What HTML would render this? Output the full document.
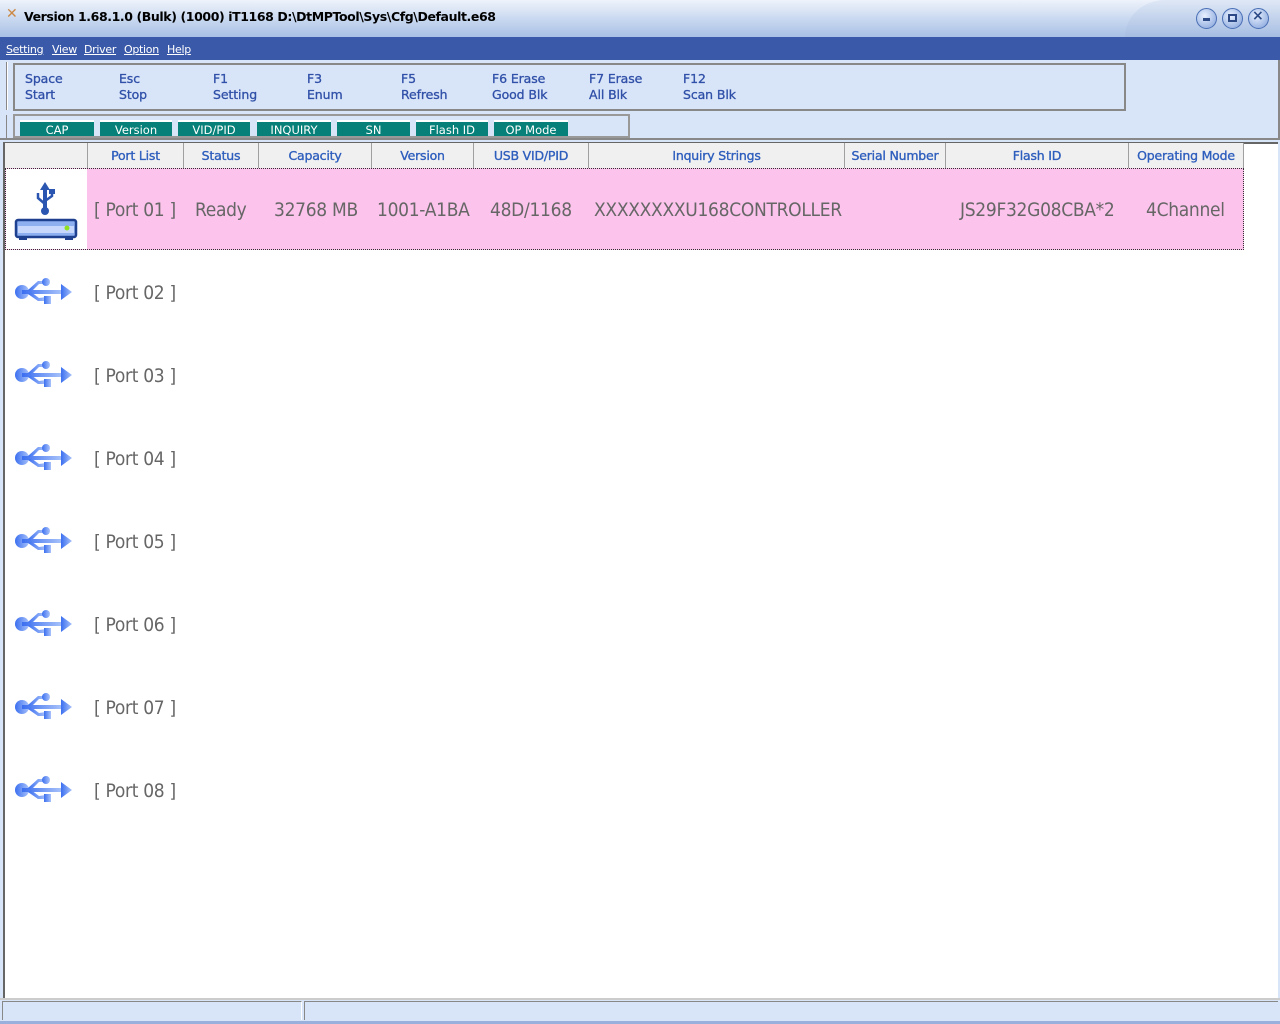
<!DOCTYPE html>
<html><head><style>
*{margin:0;padding:0;box-sizing:border-box}
body{width:1280px;height:1024px;position:relative;background:#d8e4f8;font-family:"DejaVu Sans","Liberation Sans",sans-serif;overflow:hidden}
.a{position:absolute}
#title{left:0;top:0;width:1280px;height:37px;background:linear-gradient(#eef3fb,#c3d4ee 60%,#a9c1e6);}
#title .t{left:24px;top:9px;font-size:12.5px;color:#000;font-family:"DejaVu Sans",sans-serif;font-weight:bold;letter-spacing:-0.4px}
#menu{left:0;top:37px;width:1280px;height:23px;background:#3a59a9;}
#menu span{position:absolute;top:6px;font-size:11px;color:#fff;text-decoration:underline;letter-spacing:-0.3px}
.tb{font-size:12.5px;color:#3050a8;line-height:16px;letter-spacing:-0.1px;-webkit-text-stroke:0.3px #3050a8}
.tab{top:120px;height:16px;background:#068078;color:#fff;font-size:11.5px;text-align:center;line-height:17px;border-top:2px solid #fff}
.hd{top:143px;height:25px;background:#f0f0f0;border-right:1px solid #a0a0a0;color:#2e5ebd;font-size:12.5px;text-align:center;line-height:25px;letter-spacing:-0.2px;-webkit-text-stroke:0.35px #2e5ebd}
.rt{font-size:19px;color:#666;font-family:"DejaVu Sans Condensed","DejaVu Sans",sans-serif;letter-spacing:-0.3px}
</style></head><body>
<div id="title" class="a">
<div class="a" style="left:6px;top:6px;font-size:14px;color:#c84">✕</div>
<div class="t a">Version 1.68.1.0 (Bulk) (1000) iT1168 D:\DtMPTool\Sys\Cfg\Default.e68</div>
<div class="a" style="left:1125px;top:0;width:155px;height:37px;background:linear-gradient(#dfe8f6,#a6bde2);border-top-left-radius:40px 37px"></div>
<div class="a" style="left:1196px;top:8px;width:21px;height:21px;border-radius:50%;background:radial-gradient(circle at 40% 35%,#e8f0ff,#7f9fd8);border:1px solid #4a6fb5"></div>
<div class="a" style="left:1222px;top:8px;width:21px;height:21px;border-radius:50%;background:radial-gradient(circle at 40% 35%,#e8f0ff,#7f9fd8);border:1px solid #4a6fb5"></div>
<div class="a" style="left:1248px;top:8px;width:21px;height:21px;border-radius:50%;background:radial-gradient(circle at 40% 35%,#e8f0ff,#7f9fd8);border:1px solid #4a6fb5"></div>
<div class="a" style="left:1203px;top:18px;width:7px;height:3px;background:#2d4a86"></div>
<div class="a" style="left:1228px;top:14px;width:9px;height:8px;border:2px solid #2d4a86"></div>
<div class="a" style="left:1252px;top:8px;font-size:14px;font-weight:bold;color:#2d4a86">×</div>
</div>
<div id="menu" class="a"><span style="left:6px">Setting</span><span style="left:52px">View</span><span style="left:84px">Driver</span><span style="left:124px">Option</span><span style="left:167px">Help</span></div>
<div class="a" style="left:0;top:60px;width:1280px;height:80px;border-bottom:2px solid #888;border-right:2px solid #888"></div>
<div class="a" style="left:6px;top:62px;width:2px;height:48px;border-left:1px solid #888;border-right:1px solid #fff"></div>
<div class="a" style="left:13px;top:63px;width:1113px;height:48px;border:2px solid #888;border-right-color:#888"></div>
<div class="a" style="left:6px;top:115px;width:2px;height:23px;border-left:1px solid #888"></div>
<div class="a" style="left:13px;top:114px;width:617px;height:24px;border:2px solid #999;background:#d8e4f8"></div>
<div class="a tb" style="left:25px;top:71px">Space<br>Start</div>
<div class="a tb" style="left:119px;top:71px">Esc<br>Stop</div>
<div class="a tb" style="left:213px;top:71px">F1<br>Setting</div>
<div class="a tb" style="left:307px;top:71px">F3<br>Enum</div>
<div class="a tb" style="left:401px;top:71px">F5<br>Refresh</div>
<div class="a tb" style="left:492px;top:71px">F6 Erase<br>Good Blk</div>
<div class="a tb" style="left:589px;top:71px">F7 Erase<br>All Blk</div>
<div class="a tb" style="left:683px;top:71px">F12<br>Scan Blk</div>
<div class="a tab" style="left:20px;width:74px">CAP</div>
<div class="a tab" style="left:100px;width:72px">Version</div>
<div class="a tab" style="left:178px;width:72px">VID/PID</div>
<div class="a tab" style="left:257px;width:74px">INQUIRY</div>
<div class="a tab" style="left:337px;width:73px">SN</div>
<div class="a tab" style="left:416px;width:72px">Flash ID</div>
<div class="a tab" style="left:494px;width:74px">OP Mode</div>
<div class="a" style="left:3px;top:142px;width:1275px;height:856px;background:#fff;border-left:2px solid #666;border-top:2px solid #666"></div>
<div class="a hd" style="left:5px;width:83px"></div>
<div class="a hd" style="left:88px;width:96px">Port List</div>
<div class="a hd" style="left:184px;width:75px">Status</div>
<div class="a hd" style="left:259px;width:113px">Capacity</div>
<div class="a hd" style="left:372px;width:102px">Version</div>
<div class="a hd" style="left:474px;width:115px">USB VID/PID</div>
<div class="a hd" style="left:589px;width:256px">Inquiry Strings</div>
<div class="a hd" style="left:845px;width:101px">Serial Number</div>
<div class="a hd" style="left:946px;width:183px">Flash ID</div>
<div class="a hd" style="left:1129px;width:115px">Operating Mode</div>
<div class="a" style="left:5px;top:168px;width:1239px;height:82px;border:1px dotted #333;background:#fcc4ec"></div>
<div class="a" style="left:6px;top:169px;width:81px;height:80px;background:#fff"></div>
<svg class="a" style="left:14px;top:180px" width="64" height="62" viewBox="0 0 64 62">
<path d="M31 2 L26 10 L29 10 L29 30 L33 30 L33 10 L36 10 Z" fill="#2a55b0"/>
<circle cx="31" cy="31" r="4" fill="#2a55b0"/>
<path d="M31 24 L24 18 L24 13 M31 21 L38 16 L38 12" stroke="#2a55b0" stroke-width="2.5" fill="none"/>
<rect x="35" y="9" width="6" height="5" fill="#2a55b0"/>
<rect x="2" y="40" width="60" height="17" rx="2" fill="#8fb0f0" stroke="#1f3f8f" stroke-width="2.5"/>
<rect x="4" y="46" width="56" height="7" fill="#c8d8fc"/>
<circle cx="53" cy="48" r="2.5" fill="#90e020"/>
<rect x="5" y="57" width="8" height="3" fill="#1f3f8f"/><rect x="51" y="57" width="8" height="3" fill="#1f3f8f"/>
</svg>
<div class="a rt" style="left:94px;top:199px">[ Port 01 ]</div>
<div class="a rt" style="left:195px;top:199px">Ready</div>
<div class="a rt" style="left:274px;top:199px">32768 MB</div>
<div class="a rt" style="left:377px;top:199px">1001-A1BA</div>
<div class="a rt" style="left:490px;top:199px">48D/1168</div>
<div class="a rt" style="left:594px;top:199px">XXXXXXXXU168CONTROLLER</div>
<div class="a rt" style="left:960px;top:199px">JS29F32G08CBA*2</div>
<div class="a rt" style="left:1146px;top:199px">4Channel</div>

<svg width="0" height="0" style="position:absolute"><defs><linearGradient id="g" x1="0" x2="1"><stop offset="0" stop-color="#3b6ff0"/><stop offset="1" stop-color="#a8c2fa"/></linearGradient></defs></svg>
<div id="ports"></div>
<script>
var h='';for(var i=2;i<=8;i++){var y=292+(i-2)*83;
h+='<svg class="a" style="left:14px;top:'+(y-17)+'px" width="60" height="34" viewBox="0 0 60 34"><g fill="url(#g)" stroke="none"><circle cx="8" cy="17" r="7"/><rect x="8" y="15" width="40" height="4"/><path d="M47 9 L58 17 L47 25 Z"/><path d="M14 15 L24 6 L30 6 L30 9 L25 9 L17 17 Z"/><circle cx="32" cy="7" r="4"/><path d="M14 19 L24 26 L32 26 L32 22 L25 23 L17 17 Z"/><rect x="30" y="21" width="7" height="8"/></g></svg>';
h+='<div class="a rt" style="left:94px;top:'+(y-10)+'px">[ Port 0'+i+' ]</div>';}
document.getElementById('ports').innerHTML=h;
</script>
<div class="a" style="left:0;top:998px;width:1280px;height:26px;background:#d8e4f8;border-top:2px solid #ccc"></div>
<div class="a" style="left:2px;top:1001px;width:300px;height:19px;border-top:1px solid #888;border-left:1px solid #888;border-right:1px solid #fff"></div>
<div class="a" style="left:304px;top:1001px;width:974px;height:19px;border-top:1px solid #888;border-left:1px solid #888"></div>
<div class="a" style="left:0;top:1021px;width:1280px;height:3px;background:#9ab0dc"></div>
</body></html>
